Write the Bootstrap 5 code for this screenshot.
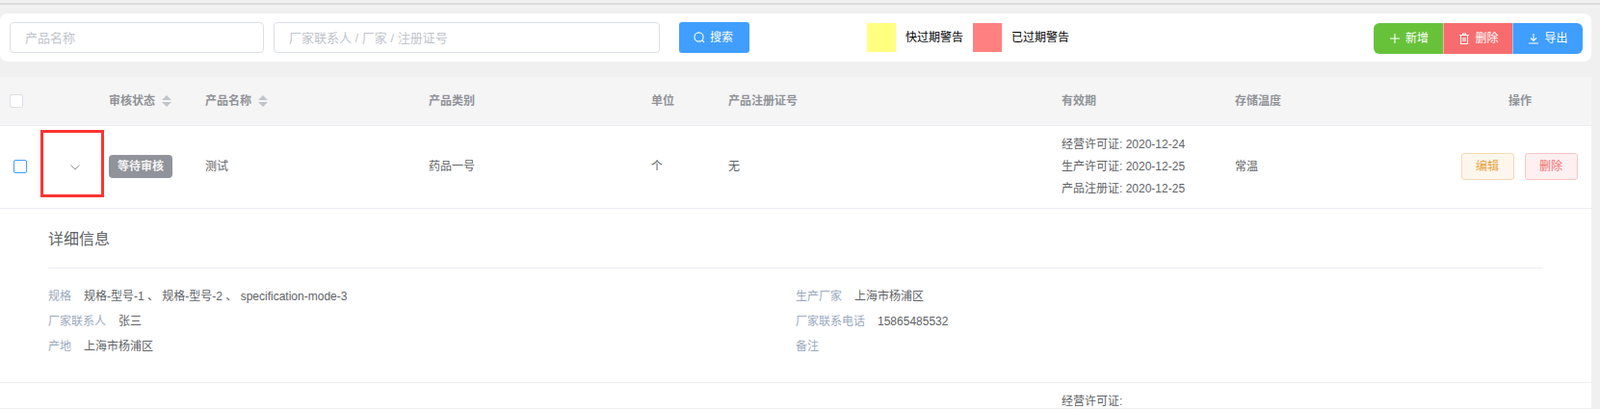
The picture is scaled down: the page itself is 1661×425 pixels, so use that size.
<!DOCTYPE html>
<html lang="zh-CN">
<head>
  <meta charset="UTF-8"/>
  <meta name="viewport" content="width=device-width, initial-scale=1.0"/>
  <title>产品管理</title>
  <link href="https://cdn.jsdelivr.net/npm/bootstrap@5.3.0/dist/css/bootstrap.min.css" rel="stylesheet"/>
  <style>
    html, body { height: 425px; overflow: hidden; }
    body {
      background: #f0f0f0;
      color: #606266;
      font-family: "Liberation Sans", "Noto Sans CJK SC", sans-serif;
      font-size: 12px;
    }
    .top-line { height: 2px; margin-top: 3px; background: #dcdcdc; }
    .page-wrap { width: 1652px; padding-top: 9px; }

    /* toolbar */
    .tool-bar { height: 50px; padding: 9px 9px 0 10px; background: #fff; border-radius: 8px; margin-bottom: 16px; }
    .tool-input {
      height: 32px; padding: 0 15px; font-size: 13px;
      border: 1px solid #dcdfe6; border-radius: 4px; color: #606266;
    }
    .tool-input::placeholder { color: #c0c4cc; }
    .name-input { width: 264px; margin-right: 10px; }
    .factory-input { width: 401px; margin-right: 20px; }
    .btn-search { width: 73px; height: 32px; padding: 0 3px 0 0; font-size: 12px; color: #fff; background: #409eff; border: 0; border-radius: 3px; }
    .btn-search:hover { color: #fff; background: #409eff; }
    .legend-box { width: 30px; height: 30px; margin-top: 1px; }
    .legend-text { color: #000; margin: 1px 10px 0; line-height: 30px; white-space: nowrap; }
    .legend-yellow { background: #ffff80; margin-left: 122px; }
    .legend-red { background: #ff8080; }
    .act-group { margin-left: auto; margin-top: 1px; --bs-border-radius: 4px; }
    .act-group .btn {
      width: 73px; height: 32px; padding: 0; font-size: 12px; color: #fff; border: 0;
      display: flex; align-items: center; justify-content: center; gap: 5px;
    }
    .act-group .btn + .btn { border-left: 1px solid rgba(255,255,255,.45); }
    .act-add { background: #67c23a; }
    .act-del { background: #f76d6f; }
    .act-exp { background: #409eff; }

    /* table */
    .goods-table { table-layout: fixed; width: 1652px; margin: 0; font-size: 12px; color: #606266; background: #fff; }
    .goods-table > :not(caption) > * > * { padding: 0; border-bottom: 1px solid #ebeef5; box-shadow: none; vertical-align: middle; color: #606266; background: transparent; }
    .goods-table thead th { height: 50px; background: #f5f5f5; color: #909399; font-weight: 700; }
    .goods-table tbody td { height: 86px; }
    .goods-table .detail-cell { height: 181px; vertical-align: top; padding: 0 50px; }
    .goods-table tbody .tail-row td { height: 27px; border-bottom: 0; vertical-align: top; padding-top: 12px; }
    .sort-caret { display: inline-block; vertical-align: -2px; margin-left: 7px; }
    .tick-box { display: block; width: 14px; height: 14px; background: #fff; border: 1px solid #dcdfe6; border-radius: 2px; }
    .tick-head { margin-left: 10px; }
    .tick-row { margin-left: 14px; border-color: #409eff; }
    .expand-cell { position: relative; }
    .chevron { display: block; margin: 2px 0 0 31px; }
    .red-mark { position: absolute; left: 0; top: 4px; width: 66px; height: 70px; border: 3px solid #f33; }
    .state-tag { display: inline-block; width: 66px; height: 24px; line-height: 24px; padding: 0; font-size: 12px; font-weight: 700; color: #f4f4f5; background: #909399; border-radius: 4px; }
    .date-line { line-height: 23px; white-space: nowrap; }
    .tail-row .date-line { line-height: 14px; }
    .op-head { padding-left: 2px !important; }
    .row-btn { width: 55px; height: 28px; padding: 0; font-size: 12px; border-radius: 3px; }
    .row-edit { color: #e6a23c; background: #fdf6ec; border: 1px solid #f5dab1; }
    .row-del { color: #f56c6c; background: #fef0f0; border: 1px solid #fbc4c4; margin-left: 11px; }
    .row-edit:hover { color: #e6a23c; background: #fdf6ec; border-color: #f5dab1; }
    .row-del:hover { color: #f56c6c; background: #fef0f0; border-color: #fbc4c4; }

    /* detail */
    .detail-title { font-size: 16px; line-height: 22px; padding-top: 21px; padding-bottom: 18px; color: #606266; border-bottom: 1px solid #ebeef5; margin-bottom: 16px; }
    .detail-line { line-height: 26px; height: 26px; white-space: nowrap; }
    .detail-label { color: #99a9bf; margin-right: 13px; }
  </style>
</head>
<body>
  <div class="top-line"></div>
  <div class="page-wrap">

    <!-- search + actions -->
    <div class="tool-bar d-flex align-items-start">
      <input type="text" class="form-control tool-input name-input" placeholder="产品名称"/>
      <input type="text" class="form-control tool-input factory-input" placeholder="厂家联系人 / 厂家 / 注册证号"/>
      <button class="btn btn-search d-flex align-items-center justify-content-center gap-1">
        <svg width="14" height="14" viewBox="0 0 14 14" fill="none" stroke="#fff" stroke-width="1.1"><circle cx="6.5" cy="6.5" r="4.6"/><path d="M10 10l2 2"/></svg>
        <span>搜索</span>
      </button>
      <div class="legend-box legend-yellow"></div>
      <span class="legend-text">快过期警告</span>
      <div class="legend-box legend-red"></div>
      <span class="legend-text">已过期警告</span>
      <div class="btn-group act-group">
        <button class="btn act-add">
          <svg width="12" height="12" viewBox="0 0 12 12" stroke="#fff" stroke-width="1.1"><path d="M6 1v10M1 6h10"/></svg>
          <span>新增</span>
        </button>
        <button class="btn act-del">
          <svg width="12" height="12" viewBox="0 0 12 12" fill="none" stroke="#fff" stroke-width="1.1"><path d="M1 2.5h10M4.5 2.5V1h3v1.5M2.5 2.5v9h7v-9M5 5v4M7 5v4"/></svg>
          <span>删除</span>
        </button>
        <button class="btn act-exp">
          <svg width="12" height="12" viewBox="0 0 12 12" fill="none" stroke="#fff" stroke-width="1.1"><path d="M6 1v7M3 5.5L6 8.5l3-3M1 11h10"/></svg>
          <span>导出</span>
        </button>
      </div>
    </div>

    <table class="table goods-table">
      <colgroup>
        <col style="width:42px"/><col style="width:71px"/><col style="width:100px"/><col style="width:232px"/>
        <col style="width:231px"/><col style="width:80px"/><col style="width:346px"/><col style="width:180px"/>
        <col style="width:220px"/><col style="width:150px"/>
      </colgroup>
      <thead>
        <tr>
          <th><span class="tick-box tick-head"></span></th>
          <th></th>
          <th>审核状态<svg class="sort-caret" width="10" height="12" viewBox="0 0 10 12" fill="#c0c4cc"><path d="M5 0l5 5H0zM0 7h10l-5 5z"/></svg></th>
          <th>产品名称<svg class="sort-caret" width="10" height="12" viewBox="0 0 10 12" fill="#c0c4cc"><path d="M5 0l5 5H0zM0 7h10l-5 5z"/></svg></th>
          <th>产品类别</th>
          <th>单位</th>
          <th>产品注册证号</th>
          <th>有效期</th>
          <th>存储温度</th>
          <th class="text-center op-head">操作</th>
        </tr>
      </thead>
      <tbody>
        <tr>
          <td><span class="tick-box tick-row"></span></td>
          <td class="expand-cell">
            <svg class="chevron" width="10" height="6" viewBox="0 0 10 6" fill="none" stroke="#909399" stroke-width="1"><path d="M.5 .5L5 5 9.500 .5"/></svg>
            <div class="red-mark"></div>
          </td>
          <td><span class="badge state-tag">等待审核</span></td>
          <td>测试</td>
          <td>药品一号</td>
          <td>个</td>
          <td>无</td>
          <td>
            <div class="date-line">经营许可证: 2020-12-24</div>
            <div class="date-line">生产许可证: 2020-12-25</div>
            <div class="date-line">产品注册证: 2020-12-25</div>
          </td>
          <td>常温</td>
          <td class="text-center">
            <button class="btn row-btn row-edit">编辑</button><button class="btn row-btn row-del">删除</button>
          </td>
        </tr>
        <tr>
          <td colspan="10" class="detail-cell">
            <div class="detail-title">详细信息</div>
            <div class="row g-0">
              <div class="col-6">
                <div class="detail-line"><span class="detail-label">规格</span>规格-型号-1 、 规格-型号-2 、 specification-mode-3</div>
                <div class="detail-line"><span class="detail-label">厂家联系人</span>张三</div>
                <div class="detail-line"><span class="detail-label">产地</span>上海市杨浦区</div>
              </div>
              <div class="col-6">
                <div class="detail-line"><span class="detail-label">生产厂家</span>上海市杨浦区</div>
                <div class="detail-line"><span class="detail-label">厂家联系电话</span>15865485532</div>
                <div class="detail-line"><span class="detail-label">备注</span></div>
              </div>
            </div>
          </td>
        </tr>
        <tr class="tail-row">
          <td></td><td></td><td></td><td></td><td></td><td></td><td></td>
          <td><div class="date-line">经营许可证:</div></td>
          <td></td><td></td>
        </tr>
      </tbody>
    </table>
  </div>
</body>
</html>
